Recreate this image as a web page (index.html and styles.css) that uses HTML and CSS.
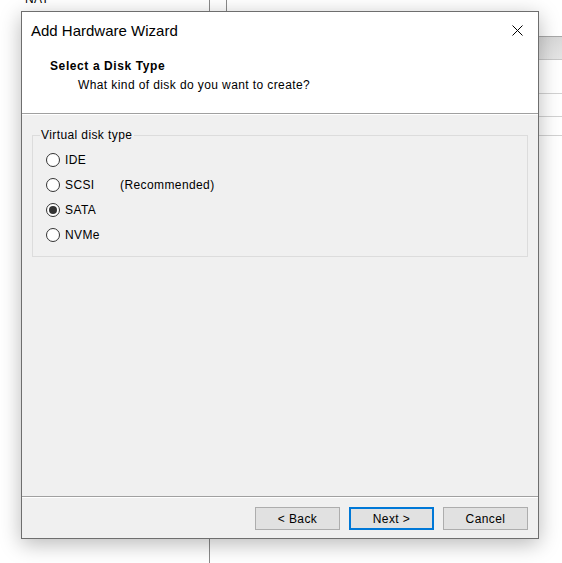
FILE: index.html
```html
<!DOCTYPE html>
<html lang="en">
<head>
    <meta charset="UTF-8">
    <title>Add Hardware Wizard</title>
    <link rel="stylesheet" href="styles.css">
</head>
<body>
    <!-- 背景里的主窗口 -->
    <div class="backdrop">
        <div class="pane-left">
            <div class="pane-item">NAT</div>
        </div>
        <div class="pane-right">
            <div class="strip"><div class="strip-col"></div></div>
            <div class="band"></div>
            <div class="list-row row-a"></div>
            <div class="list-row row-b"></div>
            <div class="list-row row-c"></div>
        </div>
    </div>

    <!-- 向导对话框 -->
    <div class="window">
        <div class="top">
            <div class="titlebar">
                <span class="title">Add Hardware Wizard</span>
                <svg class="close" width="11" height="11" viewBox="0 0 11 11">
                    <path d="M0.5 0.5 L10.5 10.5 M10.5 0.5 L0.5 10.5" stroke="#000" stroke-width="1" fill="none"/>
                </svg>
            </div>
            <div class="header">
                <div class="header-title">Select a Disk Type</div>
                <div class="header-sub">What kind of disk do you want to create?</div>
            </div>
        </div>
        <div class="body">
            <fieldset class="group">
                <legend>Virtual disk type</legend>
                <label class="radio-row">
                    <span class="radio"></span>
                    <span class="radio-label">IDE</span>
                </label>
                <label class="radio-row">
                    <span class="radio"></span>
                    <span class="radio-label wide">SCSI</span>
                    <span class="radio-note">(Recommended)</span>
                </label>
                <label class="radio-row">
                    <span class="radio checked"></span>
                    <span class="radio-label">SATA</span>
                </label>
                <label class="radio-row">
                    <span class="radio"></span>
                    <span class="radio-label">NVMe</span>
                </label>
            </fieldset>
        </div>
        <div class="footer">
            <button class="btn">&lt; Back</button>
            <button class="btn btn-default">Next &gt;</button>
            <button class="btn">Cancel</button>
        </div>
    </div>
</body>
</html>
```

FILE: styles.css
```css
html, body {
    margin: 0;
    padding: 0;
}
body {
    width: 562px;
    height: 563px;
    overflow: hidden;
    position: relative;
    background: #fff;
    font-family: "Liberation Sans", Arial, sans-serif;
    font-size: 12px;
    line-height: 16px;
    letter-spacing: 0.4px;
    color: #000;
}

/* background app */
.backdrop {
    display: flex;
    height: 563px;
}
.pane-left {
    width: 209px;
    border-right: 1px solid #8a8a8a;
}
.pane-item {
    margin-top: -9px;
    padding-left: 25px;
}
.pane-right {
    flex: 1;
}
.strip {
    height: 11px;
}
.strip-col {
    height: 11px;
    margin-left: 16px;
    border-left: 1px solid #8a8a8a;
}
.band {
    margin-top: 25px;
    height: 24px;
    box-sizing: border-box;
    border-top: 1px solid #a8a8a8;
    border-bottom: 1px solid #c8c8c8;
    background: linear-gradient(#d9d9d9, #e5e5e5);
}
.list-row {
    box-sizing: border-box;
    border-bottom: 1px solid #d2d2d2;
}
.row-a { height: 34px; }
.row-b { height: 23px; }
.row-c { height: 19px; }

/* dialog */
.window {
    position: absolute;
    left: 21px;
    top: 11px;
    width: 518px;
    height: 528px;
    box-sizing: border-box;
    border: 1px solid #6e6e6e;
    background: #f0f0f0;
    display: flex;
    flex-direction: column;
    box-shadow: 0 5px 20px rgba(0,0,0,0.28);
}
.top {
    height: 102px;
    box-sizing: border-box;
    background: #fff;
    border-bottom: 1px solid #a0a0a0;
}
.titlebar {
    display: flex;
    justify-content: space-between;
    align-items: flex-start;
    padding: 9px 15px 0 9px;
}
.title {
    font-size: 15px;
    line-height: 20px;
    letter-spacing: 0;
}
.close {
    margin-top: 4px;
}
.header {
    padding-left: 28px;
    margin-top: 17px;
}
.header-title {
    font-weight: bold;
    letter-spacing: 0.6px;
}
.header-sub {
    margin-top: 3px;
    padding-left: 28px;
}

.body {
    flex: 1;
    padding-top: 12px;
    border-top: 1px solid #fff;
    box-sizing: border-box;
}
.group {
    margin: 0 10px;
    padding: 4px 0 9px 7px;
    border: 1px solid #dcdcdc;
    height: 130px;
    box-sizing: border-box;
}
.group legend {
    padding: 0 2px 0 1px;
}
.radio-row {
    display: flex;
    align-items: center;
    height: 25px;
    padding-left: 6px;
}
.radio {
    width: 14px;
    height: 14px;
    box-sizing: border-box;
    border: 1px solid #333;
    border-radius: 50%;
    background: #fff;
    display: flex;
    align-items: center;
    justify-content: center;
    margin-right: 5px;
}
.radio.checked::after {
    content: "";
    width: 8px;
    height: 8px;
    border-radius: 50%;
    background: #333;
}
.radio-label.wide {
    width: 55px;
}

.footer {
    height: 42px;
    box-sizing: border-box;
    border-top: 1px solid #a0a0a0;
    box-shadow: inset 0 1px #fff;
    display: flex;
    justify-content: flex-end;
    gap: 9px;
    padding: 10px 10px 0 0;
}
.btn {
    width: 85px;
    height: 23px;
    box-sizing: border-box;
    background: #e1e1e1;
    border: 1px solid #adadad;
    font-family: "Liberation Sans", Arial, sans-serif;
    font-size: 12px;
    letter-spacing: 0.4px;
    color: #000;
    padding: 0;
}
.btn-default {
    border: 2px solid #0078d7;
}
```
